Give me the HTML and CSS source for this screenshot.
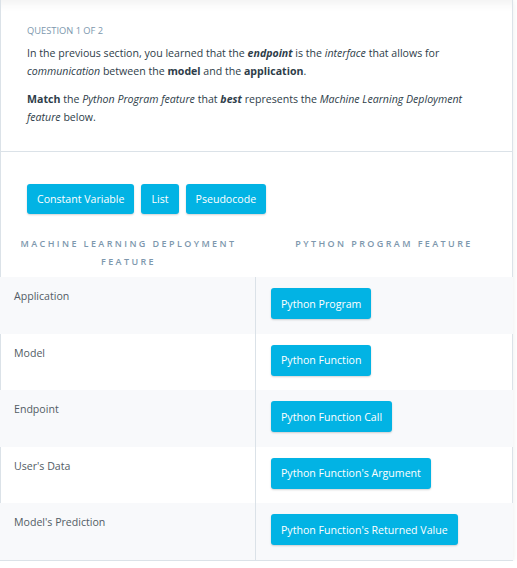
FILE: index.html
```html
<!DOCTYPE html>
<html>
<head>
<meta charset="utf-8">
<link rel="stylesheet" href="styles.css">
</head>
<body>
<div class="card">
  <div class="intro">
    <div class="qlabel">QUESTION 1 OF 2</div>
    <p class="text">In the previous section, you learned that the <b><i>endpoint</i></b> is the <i>interface</i> that allows for <i>communication</i> between the <b>model</b> and the <b>application</b>.</p>
    <p class="text"><b>Match</b> the <i>Python Program feature</i> that <b><i>best</i></b> represents the <i>Machine Learning Deployment feature</i> below.</p>
  </div>
  <div class="body">
    <div class="bank">
      <span class="chip">Constant Variable</span>
      <span class="chip">List</span>
      <span class="chip">Pseudocode</span>
    </div>
    <div class="heads">
      <div class="head head-left">MACHINE LEARNING DEPLOYMENT FEATURE</div>
      <div class="head">PYTHON PROGRAM FEATURE</div>
    </div>
  </div>
  <div class="table">
    <div class="row alt"><div class="label">Application</div><div class="slot"><span class="chip">Python Program</span></div></div>
    <div class="row"><div class="label">Model</div><div class="slot"><span class="chip">Python Function</span></div></div>
    <div class="row alt"><div class="label">Endpoint</div><div class="slot"><span class="chip">Python Function Call</span></div></div>
    <div class="row"><div class="label">User's Data</div><div class="slot"><span class="chip">Python Function's Argument</span></div></div>
    <div class="row alt"><div class="label">Model's Prediction</div><div class="slot"><span class="chip">Python Function's Returned Value</span></div></div>
  </div>
</div>
</body>
</html>
```

FILE: styles.css
```css
html, body {
  margin: 0;
  padding: 0;
  background: #ffffff;
}
body {
  font-family: "Open Sans", "Noto Sans", sans-serif;
  color: #2e3d49;
}
.card {
  width: 511px;
  border-left: 1px solid #dbe2e8;
  border-right: 1px solid #dbe2e8;
  box-shadow: 0 0 6px rgba(0, 0, 0, 0.08), inset 0 14px 12px -12px rgba(0, 0, 0, 0.07);
  background: #ffffff;
}
.intro {
  padding: 24px 26px 25px 27px;
  border-bottom: 1px solid #dbe2e8;
  margin: 0 -1px;
}
.qlabel {
  font-size: 9.3px;
  line-height: 14px;
  color: #7d97ad;
  margin-bottom: 6px;
}
.text {
  font-size: 10.6px;
  line-height: 18px;
  margin: 0 0 10px 0;
  color: #2e3d49;
}
.text:last-child {
  margin-bottom: 0;
}
.text b {
  font-weight: 700;
}
.body {
  padding: 32px 0 6px 0;
}
.bank {
  display: flex;
  gap: 7px;
  padding-left: 26px;
}
.chip {
  display: inline-flex;
  align-items: center;
  height: 30px;
  padding: 0 10px;
  background: #02b3e4;
  color: #ffffff;
  font-size: 10.6px;
  border-radius: 3px;
  box-shadow: 0 1px 2px rgba(0, 0, 0, 0.18);
  white-space: nowrap;
}
.heads {
  display: grid;
  grid-template-columns: 255px 1fr;
  margin-top: 21px;
}
.head {
  text-align: center;
  font-size: 9px;
  line-height: 18px;
  letter-spacing: 2.4px;
  color: #7d97ad;
  font-weight: 600;
}
.head-left {
  padding: 0 14px;
}
.table {
  margin: 0 -1px;
  border-bottom: 1px solid #dbe2e8;
}
.row {
  display: grid;
  grid-template-columns: 255px 1fr;
  height: 56.6px;
}
.row.alt {
  background: #f8f9fb;
}
.row:not(.alt) .label {
  border-left: 1px solid #dbe2e8;
  padding-left: 13px;
}
.row:not(.alt) .slot {
  border-right: 1px solid #dbe2e8;
}
.label {
  padding: 10px 14px;
  font-size: 10.6px;
  line-height: 18px;
  color: #525c65;
}
.slot {
  border-left: 1px solid #dbe2e8;
  padding: 11px 15px 0 15px;
}
.slot .chip {
  height: 31px;
}
```
